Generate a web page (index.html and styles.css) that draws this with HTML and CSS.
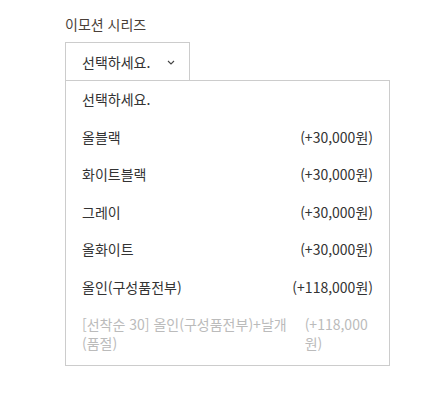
FILE: index.html
```html
<!DOCTYPE html>
<html lang="ko">
<head>
<meta charset="utf-8">
<link rel="stylesheet" href="styles.css">
</head>
<body>
<div class="field">
  <div class="label">이모션 시리즈</div>
  <div class="select">
    <span>선택하세요.</span>
    <svg class="chev" width="8" height="5" viewBox="0 0 8 5"><path d="M1 1 L4 4 L7 1" fill="none" stroke="#444" stroke-width="1.1"/></svg>
  </div>
  <ul class="list">
    <li class="opt"><span class="name">선택하세요.</span></li>
    <li class="opt"><span class="name">올블랙</span><span class="price">(+30,000원)</span></li>
    <li class="opt"><span class="name">화이트블랙</span><span class="price">(+30,000원)</span></li>
    <li class="opt"><span class="name">그레이</span><span class="price">(+30,000원)</span></li>
    <li class="opt"><span class="name">올화이트</span><span class="price">(+30,000원)</span></li>
    <li class="opt"><span class="name">올인(구성품전부)</span><span class="price">(+118,000원)</span></li>
    <li class="opt disabled"><span class="name">[선착순 30] 올인(구성품전부)+날개 (품절)</span><span class="price">(+118,000원)</span></li>
  </ul>
</div>
</body>
</html>
```
FILE: styles.css
```css
html, body {
  margin: 0;
  padding: 0;
  background: #fff;
}
body {
  font-family: "Noto Sans CJK KR", "Noto Sans", sans-serif;
  font-size: 14px;
  color: #333;
}
.field {
  padding: 14px 0 0 65px;
}
.label {
  line-height: 20px;
  color: #4a3f38;
  margin-bottom: 8px;
}
.select {
  box-sizing: border-box;
  width: 125px;
  height: 39px;
  border: 1px solid #ccc;
  display: flex;
  align-items: center;
  padding: 0 14px 0 16px;
  justify-content: space-between;
  color: #333;
}
.chev {
  display: block;
  margin-top: 1px;
}
.list {
  box-sizing: border-box;
  width: 325px;
  margin: -1px 0 0 0;
  padding: 0;
  list-style: none;
  border: 1px solid #ccc;
}
.opt {
  display: flex;
  justify-content: space-between;
  gap: 16px;
  padding: 9.25px 16px;
  line-height: 19px;
  color: #333;
}
.opt.disabled {
  color: #bbb;
  padding-bottom: 11.5px;
}
.price {
  text-align: left;
}
```
